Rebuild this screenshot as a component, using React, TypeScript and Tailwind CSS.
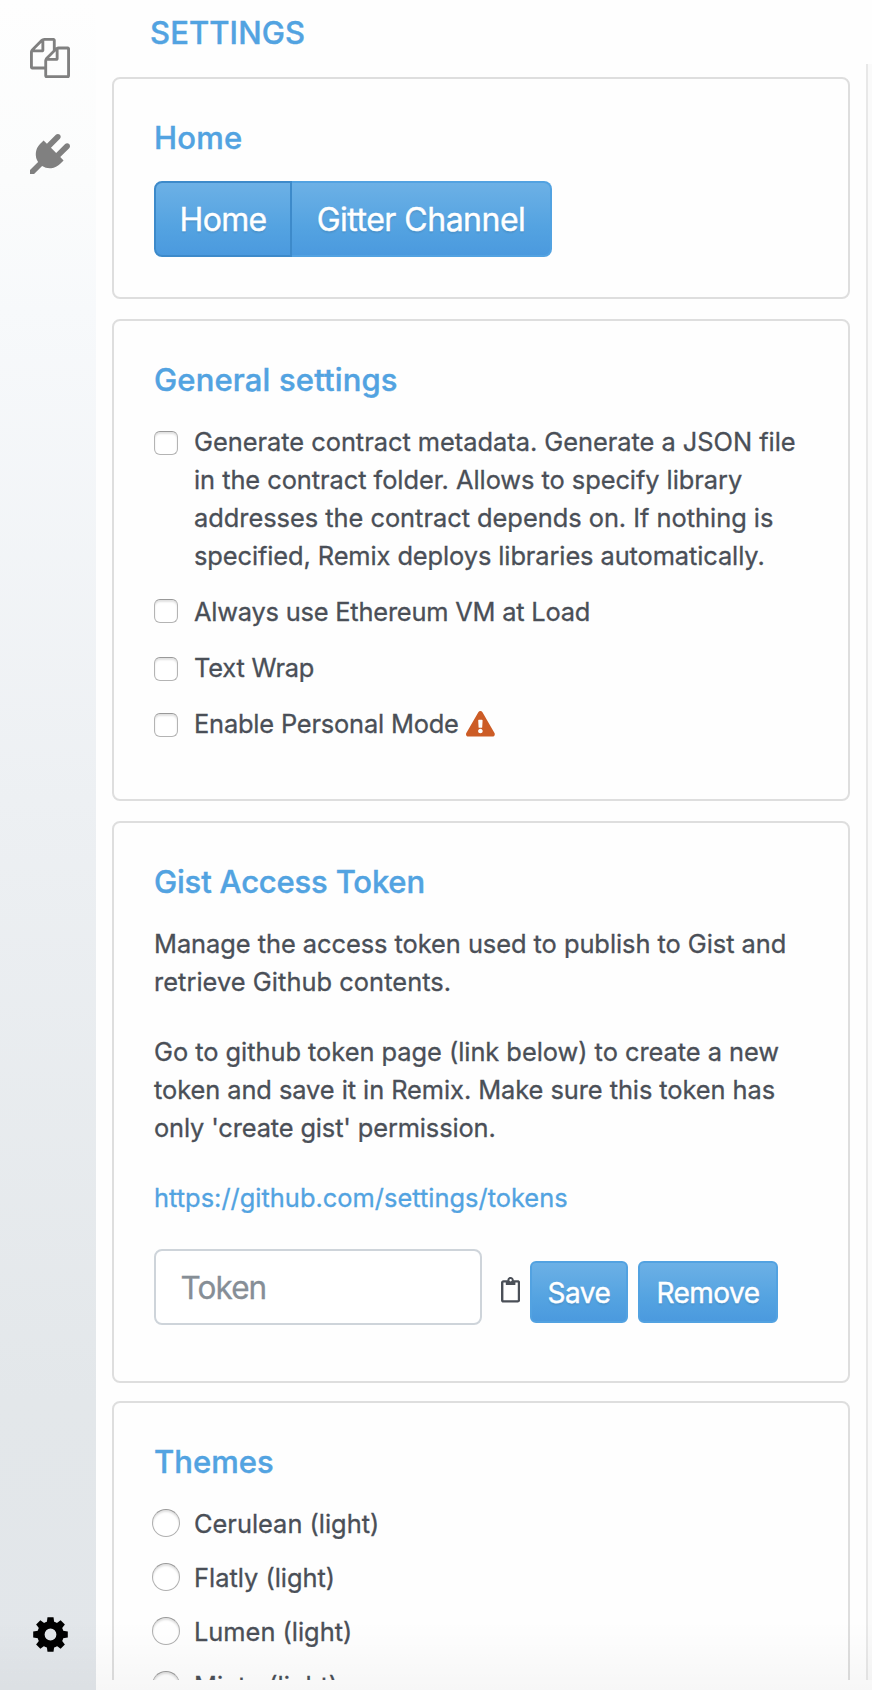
import React from "react";
import { FaExclamationTriangle, FaRegClipboard } from "react-icons/fa";

function FilesIcon() {
  return (
    <svg viewBox="0 0 1792 1792" className="size-10 fill-[#808080]">
      <path d="M1696 384q40 0 68 28t28 68v1216q0 40-28 68t-68 28h-960q-40 0-68-28t-28-68v-288h-544q-40 0-68-28t-28-68v-672q0-40 20-88t48-76l408-408q28-28 76-48t88-20h416q40 0 68 28t28 68v328q68-40 128-40h416zm-544 213l-299 299h299v-299zm-640-384l-299 299h299v-299zm196 647l316-316v-416h-384v416q0 40-28 68t-68 28h-416v640h512v-256q0-40 20-88t48-76zm956 804v-1152h-384v416q0 40-28 68t-68 28h-416v640h896z" />
    </svg>
  );
}

function PlugIcon() {
  return (
    <svg viewBox="0 0 1792 1792" className="size-10 fill-[#808080]">
      <path d="M1755 453q37 38 37 90.5t-37 90.5l-401 400 150 150-160 160q-163 163-389.5 186.5t-411.5-100.5l-362 362h-181v-181l362-362q-124-185-100.5-411.5t186.5-389.5l160-160 150 150 400-401q38-37 91-37t90 37 37 90.5-37 90.5l-400 401 234 234 401-400q38-37 91-37t90 37z" />
    </svg>
  );
}

const TEETH = [0, 45, 90, 135, 180, 225, 270, 315];

function GearIcon() {
  return (
    <svg viewBox="0 0 35 35" className="size-[35px]">
      <circle cx="17.5" cy="17.5" r="9.6" fill="none" stroke="#000" strokeWidth="7.4" />
      {TEETH.map((angle) => (
        <path key={angle} d="M13.6 6.5L14.5 0.2h6l0.9 6.3z" transform={`rotate(${angle} 17.5 17.5)`} />
      ))}
    </svg>
  );
}

function Card({ title, titleClass, className, children }: { title: string; titleClass: string; className: string; children: React.ReactNode }) {
  return (
    <section className={`flex shrink-0 flex-col items-start rounded-[8px] border-2 border-[#dedede] pt-10 pl-10 ${className}`}>
      <h2 className={`text-[31px] leading-[38px] font-medium whitespace-nowrap text-[#52a3e1] [-webkit-text-stroke:0.4px_#52a3e1] ${titleClass}`}>{title}</h2>
      {children}
    </section>
  );
}

function Check({ boxClass, children }: { boxClass: string; children: React.ReactNode }) {
  return (
    <label className="flex items-start">
      <span className={`size-6 shrink-0 rounded-[6px] border border-[#b4b4b4] border-t-[#999] bg-white shadow-[inset_0_2px_2px_rgba(0,0,0,0.12)] ${boxClass}`} />
      <span className="ml-4 whitespace-nowrap">{children}</span>
    </label>
  );
}

function Theme({ name }: { name: string }) {
  return (
    <label className="flex h-[54px] items-start">
      <span className="mt-1 -ml-0.5 size-7 shrink-0 rounded-full border border-[#b0b0b0] border-t-[#999] bg-white shadow-[inset_0_2px_2px_rgba(0,0,0,0.12)]" />
      <span className="ml-[14px] whitespace-nowrap">{name}</span>
    </label>
  );
}

const blue =
  "border-2 bg-linear-to-b from-[#6db1e6] via-[#54a3e1] via-60% to-[#4a99de] bg-origin-border text-white [text-shadow:0_2px_2px_rgba(0,0,0,0.1)] whitespace-nowrap flex items-center justify-center [-webkit-text-stroke:0.4px_white]";

export default function App() {
  return (
    <div className="relative flex h-[1690px] w-[872px] overflow-hidden bg-[#fefefe] font-[Inter,sans-serif] text-[25.4px] leading-[38px] text-[#4a4f57] [-webkit-text-stroke:0.3px_currentColor]">
      <nav className="flex w-24 shrink-0 flex-col items-start bg-[linear-gradient(to_bottom,#fefefe_0px,#fbfcfc_180px,#f7f9fb_310px,#edf0f3_800px,#e3e7ea_1400px,#e2e6ea_1690px)] pt-[38px] pb-[38px] pl-[30px]">
        <FilesIcon />
        <div className="mt-14">
          <PlugIcon />
        </div>
        <div className="mt-auto mb-[0.5px] ml-[2.5px]">
          <GearIcon />
        </div>
      </nav>

      <div className="flex h-[1680px] grow overflow-hidden">
        <main className="flex w-[770px] flex-col">
          <h1 className="mt-[14px] ml-[54px] shrink-0 text-[31px] leading-[38px] font-medium tracking-[0.1px] text-[#52a3e1] [-webkit-text-stroke:0.4px_#52a3e1]">SETTINGS</h1>

          <div className="mt-[25px] ml-4 flex w-[738px] flex-col">
            <Card title="Home" titleClass="tracking-[0.2px]" className="h-[222px]">
              <div className="mt-6 flex text-[32px]">
                <button className={`${blue} h-[76px] w-[138px] rounded-l-[8px] border-[#3d8aca] pt-[2px] tracking-[-0.7px]`}>Home</button>
                <button className={`${blue} h-[76px] w-[260px] rounded-r-[8px] border-l-0 border-[#52a2e1] pt-[2px] tracking-[-0.5px]`}>Gitter Channel</button>
              </div>
            </Card>

            <Card title="General settings" titleClass="tracking-[0.15px]" className="mt-5 h-[482px]">
              <div className="mt-6 flex flex-col gap-[18px]">
                <Check boxClass="mt-2">
                  <span className="tracking-[-0.02px]">Generate contract metadata. Generate a JSON file</span><br />
                  <span className="tracking-[-0.05px]">in the contract folder. Allows to specify library</span><br />
                  <span className="tracking-[-0.02px]">addresses the contract depends on. If nothing is</span><br />
                  <span className="tracking-[-0.09px]">specified, Remix deploys libraries automatically.</span>
                </Check>
                <Check boxClass="mt-[6px]">
                  <span className="tracking-[-0.2px]">Always use Ethereum VM at Load</span>
                </Check>
                <Check boxClass="mt-2">
                  <span className="tracking-[-0.2px]">Text Wrap</span>
                </Check>
                <Check boxClass="mt-2">
                  <span className="flex items-center">
                    <span className="tracking-[-0.18px]">Enable Personal Mode</span>
                    <FaExclamationTriangle strokeWidth={0} className="ml-[7.5px] h-[25.6px] w-[28.8px] text-[#cc5c26]" />
                  </span>
                </Check>
              </div>
            </Card>

            <Card title="Gist Access Token" titleClass="tracking-[-0.18px]" className="mt-5 h-[562px]">
              <p className="mt-6 tracking-[-0.04px] whitespace-nowrap">
                Manage the access token used to publish to Gist and<br />
                <span className="tracking-[0.05px]">retrieve Github contents.</span>
              </p>
              <p className="mt-8 tracking-[-0.03px] whitespace-nowrap">
                Go to github token page (link below) to create a new<br />
                <span className="tracking-[-0.06px]">token and save it in Remix. Make sure this token has</span><br />
                <span className="tracking-[-0.13px]">only 'create gist' permission.</span>
              </p>
              <a className="mt-8 tracking-[0.02px] text-[#52a3e1]">https://github.com/settings/tokens</a>
              <div className="mt-8 flex items-start">
                <div className="flex h-[76px] w-[328px] items-center rounded-[8px] border-2 border-[#ced4da] bg-white pt-[2px] pl-[24.5px] text-[31.5px] tracking-[-0.9px] text-[#868e96]">Token</div>
                <FaRegClipboard strokeWidth={0} className="mt-[28px] ml-[19px] h-[25.6px] w-[19.2px]" />
                <button className={`${blue} mt-3 ml-[9.8px] h-[62px] w-[98px] rounded-[6px] border-[#52a2e1] pt-[2px] text-[28px] tracking-[-0.5px]`}>Save</button>
                <button className={`${blue} mt-3 ml-[10px] h-[62px] w-[140px] rounded-[6px] border-[#52a2e1] pt-[2px] text-[28px] tracking-[-0.5px]`}>Remove</button>
              </div>
            </Card>

            <Card title="Themes" titleClass="tracking-[0.05px]" className="mt-[18px] h-[400px]">
              <div className="mt-6 flex flex-col">
                <Theme name="Cerulean (light)" />
                <Theme name="Flatly (light)" />
                <Theme name="Lumen (light)" />
                <Theme name="Minty (light)" />
              </div>
            </Card>
          </div>
        </main>
        <div className="mt-16 w-[6px] border-l-2 border-[#e8e8e8] bg-[#fafafa]" />
      </div>

      <div className="pointer-events-none absolute inset-x-0 bottom-0 h-[70px] bg-linear-to-b from-black/0 to-black/[0.028]" />
    </div>
  );
}
